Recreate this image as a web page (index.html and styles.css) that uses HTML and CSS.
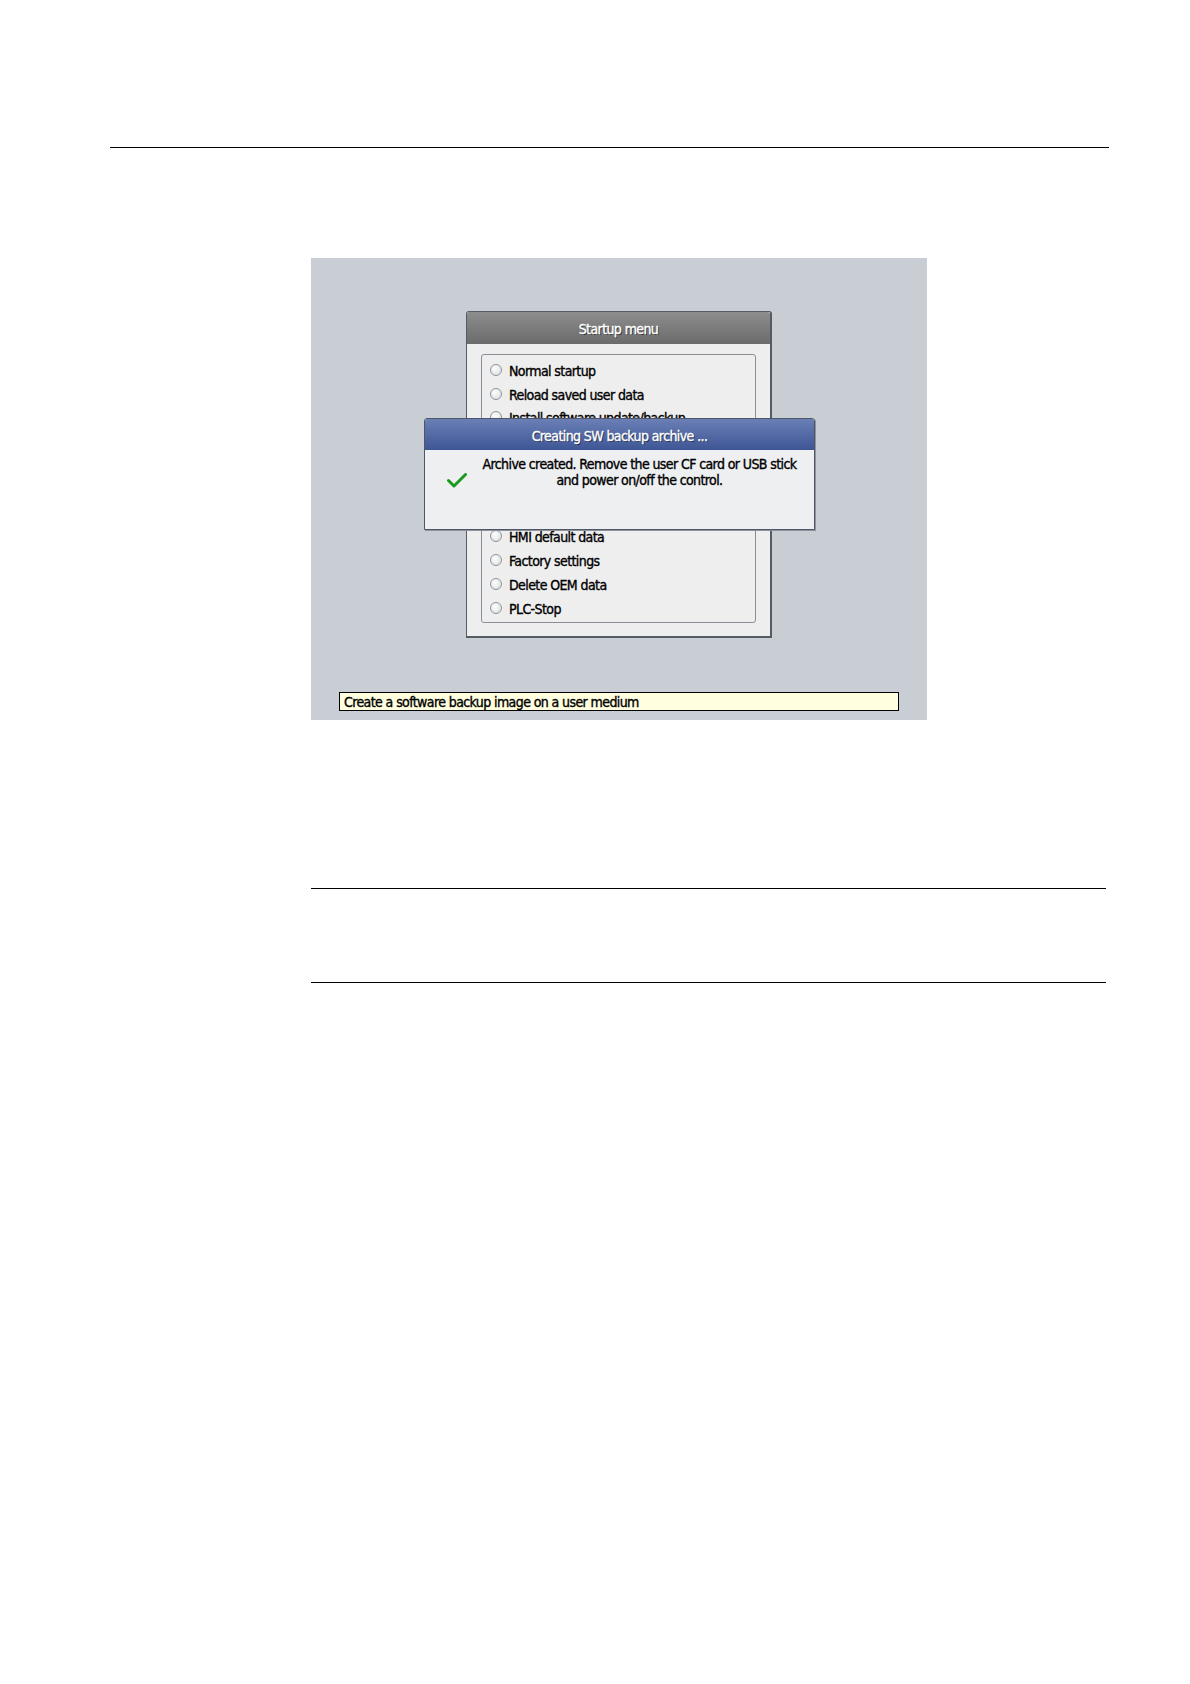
FILE: index.html
```html
<!DOCTYPE html>
<html lang="en">
<head>
<meta charset="utf-8">
<title>Startup menu</title>
<link rel="stylesheet" href="styles.css">
</head>
<body>
<div class="page">
  <div class="rule-top"></div>
  <div class="screen">
    <div class="startup">
      <div class="startup-head">Startup menu</div>
      <div class="startup-list">
        <div class="opt"><span class="radio"></span>Normal startup</div>
        <div class="opt"><span class="radio"></span>Reload saved user data</div>
        <div class="opt"><span class="radio"></span>Install software update/backup</div>
        <div class="opt"><span class="radio"></span></div>
        <div class="opt"><span class="radio"></span></div>
        <div class="opt"><span class="radio"></span></div>
        <div class="opt"><span class="radio"></span></div>
        <div class="opt"><span class="radio"></span>HMI default data</div>
        <div class="opt"><span class="radio"></span>Factory settings</div>
        <div class="opt"><span class="radio"></span>Delete OEM data</div>
        <div class="opt"><span class="radio"></span>PLC-Stop</div>
      </div>
    </div>
    <div class="status">Create a software backup image on a user medium</div>
    <div class="dialog">
      <div class="dialog-head">Creating SW backup archive ...</div>
      <div class="dialog-body">
        <svg class="check" width="20" height="15" viewBox="0 0 20 15">
          <path d="M1.5 7.5 L7 13 L18.5 1.5" fill="none" stroke="#1c9a1f" stroke-width="3" stroke-linecap="round" stroke-linejoin="round"/>
        </svg>
        <div class="msg">Archive created. Remove the user CF card or USB stick<br>and power on/off the control.</div>
      </div>
    </div>
  </div>
  <div class="rule rule-a"></div>
  <div class="rule rule-b"></div>
</div>
</body>
</html>
```
FILE: styles.css
```css
html, body {
  margin: 0;
  padding: 0;
  background: #ffffff;
}
.page {
  width: 1190px;
  height: 1684px;
  padding-top: 147px;
  box-sizing: border-box;
  font-family: "DejaVu Sans Condensed", "Liberation Sans Narrow", "Liberation Sans", sans-serif;
}
.rule-top {
  margin-left: 110px;
  width: 999px;
  height: 1px;
  background: #000;
}
.screen {
  position: relative;
  margin-top: 110px;
  margin-left: 311px;
  width: 616px;
  height: 462px;
  background: #c8ced3;
  padding-top: 53px;
  box-sizing: border-box;
  display: flex;
  flex-direction: column;
  font-size: 14px;
  letter-spacing: -0.6px;
  -webkit-text-stroke: 0.35px currentColor;
}
.startup {
  margin-left: 155px;
  width: 306px;
  height: 327px;
  box-sizing: border-box;
  border: 1px solid #555b63;
  border-right-width: 2px;
  border-bottom-width: 2px;
  border-radius: 3px 3px 0 0;
  background: #eeeeee;
  display: flex;
  flex-direction: column;
}
.startup-head {
  height: 32px;
  line-height: 35px;
  background: linear-gradient(#8d8d8d, #6b6b6b);
  color: #fff;
  text-align: center;
  text-shadow: 1px 1px 0 #303030;
  border-radius: 2px 2px 0 0;
}
.startup-list {
  margin: 10px 14px 0 14px;
  height: 269px;
  box-sizing: border-box;
  border: 1px solid #8a8f95;
  border-radius: 3px;
  padding: 3px 0 0 8px;
}
.opt {
  height: 23.8px;
  display: flex;
  align-items: center;
  color: #000;
  white-space: nowrap;
  padding-top: 2px;
  box-sizing: border-box;
}
.radio {
  width: 10px;
  height: 10px;
  border: 1px solid #8e949a;
  border-radius: 50%;
  background: radial-gradient(circle at 40% 35%, #ffffff, #e2e4e6 70%, #cfd2d5);
  margin-right: 7px;
  margin-top: -2px;
  flex: none;
  -webkit-text-stroke: 0;
}
.status {
  margin-top: 54px;
  margin-left: 28px;
  width: 560px;
  height: 19px;
  box-sizing: border-box;
  border: 1px solid #000;
  background: #ffffe0;
  line-height: 18px;
  padding-left: 4px;
  color: #000;
  white-space: nowrap;
}
.dialog {
  position: absolute;
  left: 113px;
  top: 160px;
  width: 391px;
  height: 112px;
  box-sizing: border-box;
  border: 1px solid #4e5668;
  border-radius: 3px 3px 0 0;
  background: #eeeff1;
  box-shadow: 1px 1px 0 #8c939b;
}
.dialog-head {
  height: 31px;
  line-height: 34px;
  background: linear-gradient(#6a7fb5, #3e5695);
  color: #fff;
  text-align: center;
  text-shadow: 1px 1px 0 #1e2a4a;
  border-radius: 2px 2px 0 0;
}
.dialog-body {
  display: flex;
  align-items: flex-start;
  padding: 6px 0 0 22px;
}
.check {
  flex: none;
  margin-top: 17px;
}
.msg {
  flex: 1;
  text-align: center;
  line-height: 16px;
  color: #000;
  white-space: nowrap;
  padding-right: 2px;
}
.rule {
  margin-left: 311px;
  width: 795px;
  height: 1px;
  background: #000;
}
.rule-a {
  margin-top: 168px;
}
.rule-b {
  margin-top: 93px;
}
```
